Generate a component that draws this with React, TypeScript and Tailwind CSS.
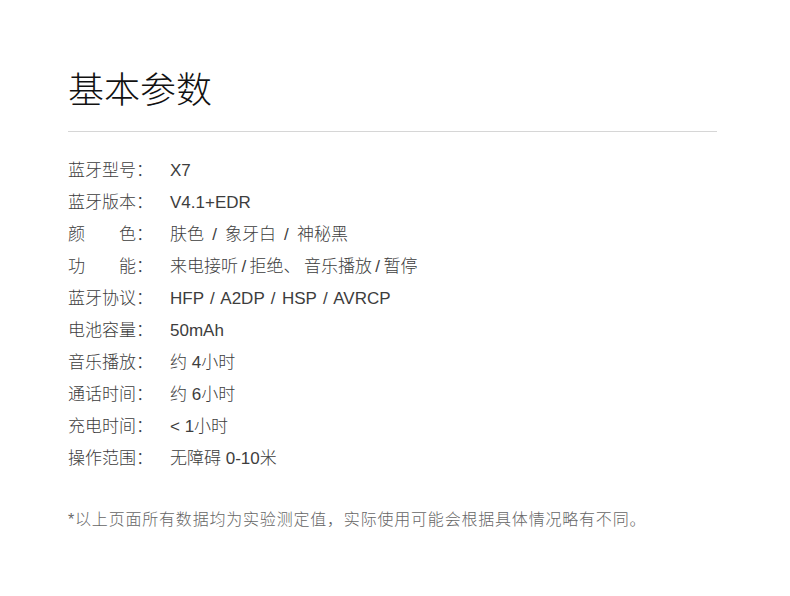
import React from "react";

const rows: [string[], string][] = [
  [["蓝", "牙", "型", "号"], "X7"],
  [["蓝", "牙", "版", "本"], "V4.1+EDR"],
  [["颜", "色"], "肤色 \u2009/\u2009 象牙白 \u2009/\u2009 神秘黑"],
  [["功", "能"], "来电接听\u2009/\u2009拒绝、\u2009音乐播放\u2009/\u2009暂停"],
  [["蓝", "牙", "协", "议"], "HFP / A2DP / HSP / AVRCP"],
  [["电", "池", "容", "量"], "50mAh"],
  [["音", "乐", "播", "放"], "约 4小时"],
  [["通", "话", "时", "间"], "约 6小时"],
  [["充", "电", "时", "间"], "< 1小时"],
  [["操", "作", "范", "围"], "无障碍 0-10米"],
];

export default function App() {
  return (
    <div
      className="w-[790px] h-[596px] bg-white pl-[68px] pt-[62px]"
      style={{ fontFamily: '"Liberation Sans", "Noto Sans CJK SC", sans-serif' }}
    >
      <h1
        className="text-[36px] leading-[50px] font-light text-[#111]"
        style={{ fontFamily: '"Noto Sans CJK SC", sans-serif' }}
      >
        基本参数
      </h1>
      <div className="w-[649px] h-px bg-[#d6d6d6] mt-[19px]" />
      <div className="mt-[23px] flex flex-col">
        {rows.map(([label, value], i) => (
          <div
            key={i}
            className="flex h-[32px] items-center text-[17px] text-[#3d3d3d] font-light"
          >
            <div className="w-[102px] flex">
              <span className="w-[68px] flex justify-between">
                {label.map((l, j) => (
                  <span key={j}>{l}</span>
                ))}
              </span>
              <span>：</span>
            </div>
            <span className={i === 4 ? "whitespace-pre [word-spacing:1.7px]" : "whitespace-pre"}>{value}</span>
          </div>
        ))}
      </div>
      <p className="mt-[33px] text-[16px] text-[#666] font-light tracking-[0.8px]">
        *以上页面所有数据均为实验测定值，实际使用可能会根据具体情况略有不同。
      </p>
    </div>
  );
}
